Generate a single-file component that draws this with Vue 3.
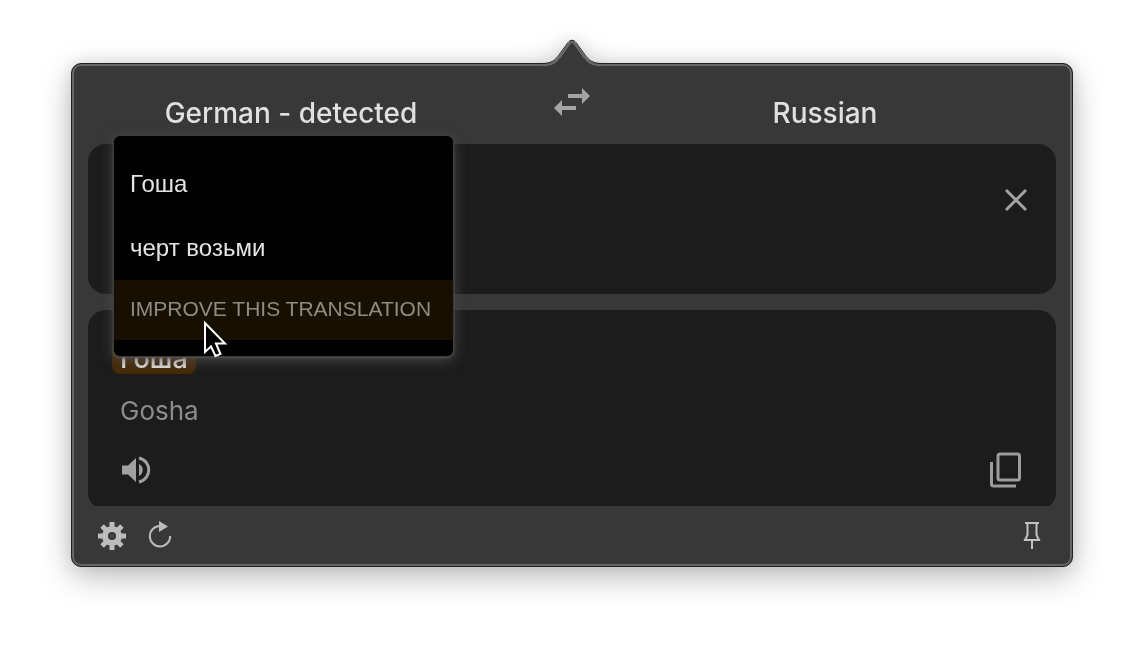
<script setup>
import { ref } from 'vue'

const source = ref('')
const alternatives = ['Гоша', 'черт возьми']
</script>

<template>
  <main class="popover">
    <svg class="beak" width="60" height="28" viewBox="0 0 60 28" aria-hidden="true">
      <path d="M0 28V25.5C11 25.5 14 22 18 17L26.500 5C28.500 2 31.500 2 33.500 5L42 17C46 22 49 25.500 60 25.500V28Z" fill="#383838" />
      <path d="M0 26C11 26 14.500 22 18.500 17L27 5C29 2 31 2 33 5L41.500 17C45.500 22 49 26 60 26" fill="none" stroke="#666" stroke-width="2.500" />
      <path d="M0 24.500C10 24.500 13 21 17 16L26 3.500C28.500.5 31.500.5 34 3.500L43 16C47 21 50 24.500 60 24.500" fill="none" stroke="#202020" stroke-width="1" />
    </svg>

    <section class="panel">
      <header class="languages">
        <button class="language">German - detected</button>
        <button class="swap" aria-label="Swap languages">
          <svg width="36" height="32" viewBox="0 0 36 32" fill="#a5a5a5">
            <path d="M14 6H28V0L36 8L28 16V10H14ZM22 18H8V12L0 20L8 28V22H22Z" />
          </svg>
        </button>
        <button class="language">Russian</button>
        <span></span>
      </header>

      <div class="cards">
        <div class="card source">
          <textarea v-model="source" aria-label="Source text"></textarea>
          <button class="clear" aria-label="Clear text">
            <svg width="24" height="24" viewBox="0 0 24 24" fill="none" stroke="#a2a2a2" stroke-width="3">
              <path d="M2 2L22 22M22 2L2 22" />
            </svg>
          </button>
        </div>

        <div class="card result">
          <div class="translation"><span class="word">Гоша</span></div>
          <p class="transliteration">Gosha</p>
          <div class="actions">
            <button aria-label="Listen">
              <svg width="31" height="28" viewBox="0 0 31 28">
                <path d="M2 9.500H8L16 2V26L8 18.500H2Z" fill="#a0a0a0" />
                <path d="M19 8C24 10 24 18 19 20Z" fill="#a0a0a0" />
                <path d="M19 2C32 5 32 23 19 26" fill="none" stroke="#a0a0a0" stroke-width="3" />
              </svg>
            </button>
            <button aria-label="Copy translation">
              <svg width="32" height="36" viewBox="0 0 32 36" fill="none" stroke="#9c9c9c" stroke-width="3">
                <rect x="8" y="2" width="21.500" height="26" rx="2" />
                <path d="M1.500 10V32Q1.500 34 3.500 34H26" />
              </svg>
            </button>
          </div>
        </div>
      </div>

      <footer class="toolbar">
        <button aria-label="Settings">
          <svg width="28" height="28" viewBox="-14 -14 28 28">
            <g fill="#bcbcbc">
              <rect v-for="n in 4" :key="n" x="-2.500" y="-14" width="5" height="28" :transform="`rotate(${n * 45})`" />
              <circle r="10" />
            </g>
            <circle r="4" fill="#383838" />
            <circle r="2" fill="#484848" />
          </svg>
        </button>
        <button aria-label="Reload">
          <svg width="24" height="28" viewBox="0 0 24 28">
            <path d="M12 4A10.200 10.200 0 1 0 22.200 14" fill="none" stroke="#bcbcbc" stroke-width="2" />
            <path d="M11 -1L20 4.500L11 10Z" fill="#bcbcbc" />
          </svg>
        </button>
        <button class="pin" aria-label="Pin window">
          <svg width="16" height="28" viewBox="0 0 16 28" fill="none" stroke="#c0c0c0" stroke-width="2">
            <path d="M1 1H15M3.500 1V13L1 18H15L12.500 13V1M8 18V27" />
          </svg>
        </button>
      </footer>

      <div class="menu">
        <button v-for="word in alternatives" :key="word" class="option">{{ word }}</button>
        <button class="improve">IMPROVE THIS TRANSLATION</button>
        <svg class="pointer" width="26" height="38" viewBox="0 0 26 38" aria-hidden="true">
          <path d="M2 2V31L8 25.500L12.500 35L17.500 33L13 22.500H22Z" fill="#000" stroke="#fff" stroke-width="2" />
        </svg>
      </div>
    </section>
  </main>
</template>

<style>
body {
  background: #fff;
}
</style>

<style scoped>
.popover {
  position: relative;
  padding: 63px 71px 79px;
  font-family: Inter, "Liberation Sans", sans-serif;
  filter: drop-shadow(0 10px 16px rgba(0, 0, 0, 0.24)) drop-shadow(0 0 8px rgba(0, 0, 0, 0.1));
}

button {
  display: block;
  margin: 0;
  padding: 0;
  border: 0;
  background: none;
  color: inherit;
  font: inherit;
}

svg {
  display: block;
  overflow: visible;
}

.beak {
  position: absolute;
  z-index: 1;
  top: 39px;
  left: 50%;
  transform: translateX(-50%);
}

.panel {
  position: relative;
  padding: 0 16px;
  border: 1px solid #202020;
  border-radius: 10px;
  background: #383838;
  box-shadow: inset 0 0 0 2px #666;
}

.languages {
  display: grid;
  grid-template-columns: 406fr 156fr 350fr 56fr;
  align-items: center;
  height: 80px;
  color: #e0e0e0;
  font-size: 28px;
  font-weight: 500;
}

.language {
  padding-top: 18px;
  white-space: nowrap;
}

.swap {
  justify-self: center;
}

.cards {
  display: flex;
  flex-direction: column;
  gap: 16px;
  overflow: hidden;
}

.card {
  border-radius: 18px;
  background: #1c1c1c;
}

.source {
  display: flex;
  padding: 24px;
}

textarea {
  flex: 1;
  height: 102px;
  padding: 0;
  border: 0;
  outline: 0;
  resize: none;
  background: none;
  color: #e2e2e2;
  font: inherit;
}

.clear {
  align-self: flex-start;
  margin: 20px 4px 0 0;
}

.result {
  margin-bottom: -4px;
  padding: 28px 34px 22px 24px;
  font-size: 26px;
}

.translation {
  display: flex;
  font-size: 27px;
  font-weight: 500;
}

.word {
  padding: 6px 8px 0;
  border-radius: 8px;
  background: #452a08;
  color: #e2e2e2;
  line-height: 30px;
}

.transliteration {
  margin: 16px 8px 20px;
  color: #8c8c8c;
  line-height: 42px;
}

.actions {
  display: flex;
  align-items: center;
  justify-content: space-between;
  padding-left: 8px;
}

.toolbar {
  display: flex;
  align-items: center;
  gap: 22px;
  height: 60px;
  padding: 0 16px 0 10px;
}

.pin {
  margin-left: auto;
}

.menu {
  position: absolute;
  top: 72px;
  left: 42px;
  min-width: 339px;
  padding: 16px 0;
  border-radius: 6px;
  background: #000;
  box-shadow: 0 0 0 1px #3c3c3c, 0 1px 2px 1px #505050, 0 3px 14px #505050;
  font-family: "Liberation Sans", sans-serif;
}

.option,
.improve {
  width: 100%;
  padding: 0 16px;
  text-align: left;
  white-space: nowrap;
}

.option {
  height: 64px;
  color: #e4e4e4;
  font-size: 24px;
}

.improve {
  height: 60px;
  padding-bottom: 2px;
  background: #170f00;
  color: #8f8b84;
  font-size: 21px;
}

.pointer {
  position: absolute;
  top: 185px;
  left: 89px;
}
</style>
